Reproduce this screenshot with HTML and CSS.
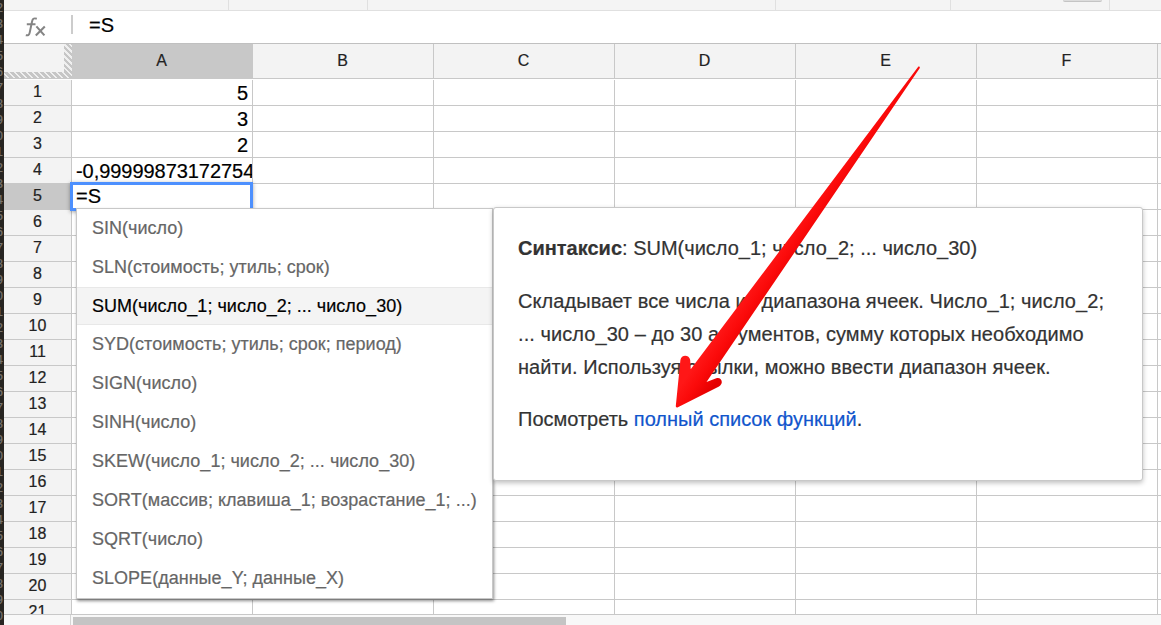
FILE: index.html
```
<!DOCTYPE html>
<html lang="ru">
<head>
<meta charset="utf-8">
<title>Таблица</title>
<link rel="stylesheet" href="styles.css">
</head>
<body>
<div class="app">
  <aside class="strip" id="strip"></aside>
  <main class="sheet">
    <div class="toolbar"><i class="t1"></i><i class="t2"></i><i class="t3"></i><i class="t4"></i><b class="knob"></b></div>
    <div class="formula">
      <svg class="fx" width="24" height="24" viewBox="0 0 24 24" fill="none" stroke="#858585" stroke-width="2">
        <path d="M12.8 3.8C9.6 2.6 8.6 4 8 6.8L5.7 17.6C5.3 19.8 4.2 20.8 1.8 20.2M2.8 9.2H11.5"/>
        <path stroke-width="2.1" d="M12.4 11.4L20.4 20.4M20.8 11.4L11.8 20.4"/>
      </svg>
      <span class="divider"></span>
      <span class="value">=S</span>
    </div>
    <div class="heads">
      <div class="corner"></div>
      <div class="col active">A</div><div class="col">B</div><div class="col">C</div><div class="col">D</div><div class="col">E</div><div class="col">F</div><div class="col last"></div>
    </div>
    <div class="grid" id="grid"></div>
    <div class="scroll"><div class="pad"></div><div class="thumb"></div></div>
  </main>
</div>
<div class="editor">=S</div>
<ul class="menu">
  <li><span>SIN(число)</span></li>
  <li><span>SLN(стоимость; утиль; срок)</span></li>
  <li class="selected"><span>SUM(число_1; число_2; ... число_30)</span></li>
  <li><span>SYD(стоимость; утиль; срок; период)</span></li>
  <li><span>SIGN(число)</span></li>
  <li><span>SINH(число)</span></li>
  <li><span>SKEW(число_1; число_2; ... число_30)</span></li>
  <li><span>SORT(массив; клавиша_1; возрастание_1; ...)</span></li>
  <li><span>SQRT(число)</span></li>
  <li><span>SLOPE(данные_Y; данные_X)</span></li>
</ul>
<section class="help">
  <p><b>Синтаксис</b>: SUM(число_1; число_2; ... число_30)</p>
  <p class="about">Складывает все числа из диапазона ячеек. Число_1; число_2;<br>... число_30 – до 30 аргументов, сумму которых необходимо<br>найти. Используя ссылки, можно ввести диапазон ячеек.</p>
  <p>Посмотреть <a>полный список функций</a>.</p>
</section>
<svg class="arrow" width="250" height="350" viewBox="672 62 250 350">
  <defs>
    <linearGradient id="red" gradientUnits="userSpaceOnUse" x1="735" y1="307" x2="758" y2="323">
      <stop offset="0" stop-color="#ff1717"/><stop offset=".45" stop-color="#fb0a0a"/><stop offset="1" stop-color="#e40000"/>
    </linearGradient>
  </defs>
  <path fill="url(#red)" d="M918.4 66.6Q920 66 919.8 68L706.5 382L716.3 378.2C721.8 376.8 724 383.6 719 386.4L677.4 407.4Q675.6 407.8 675.8 406L680.4 360C681.2 354 689.4 354.4 690.2 360L690.7 369.2Z"/>
</svg>
<script src="script.js"></script>
</body>
</html>
```

FILE: styles.css
```
* { box-sizing: border-box; }
body { margin: 0; width: 1161px; height: 625px; overflow: hidden; position: relative; background: #fff; font-family: "Liberation Sans", Arial, sans-serif; color: #000; -webkit-text-stroke: 0.2px currentColor; }
.app { display: flex; height: 625px; }
.strip { width: 4px; flex: none; overflow: hidden; background: #272522; color: #77736e; font-size: 13px; line-height: 16px; display: flex; flex-direction: column; align-items: flex-end; }
.strip span { height: 16px; flex: none; margin-right: 1px; }
.sheet { flex: 1; min-width: 0; display: flex; flex-direction: column; }
.toolbar { height: 11px; flex: none; background: #f4f4f4; border-bottom: 1px solid #e0e0e0; display: flex; }
.toolbar i { height: 10px; border-right: 1px solid #e0e0e0; flex: none; }
.t1 { width: 225px; } .t2 { width: 139px; } .t3 { width: 408px; } .t4 { width: 175px; }
.knob { width: 39px; height: 2px; margin-left: 112px; background: #dcdcdc; border-bottom: 1px solid #c4c4c4; border-radius: 0 0 3px 3px; }
.knob::after { content: ""; display: block; width: 1px; height: 10px; margin-left: 46px; background: #e0e0e0; }
.formula { height: 33px; flex: none; border-bottom: 1px solid #c0c0c0; display: flex; align-items: flex-start; }
.fx { margin: 4px 0 0 20px; flex: none; }
.divider { width: 2px; height: 19px; margin: 4px 0 0 23px; background: #ccc; }
.value { margin-left: 16px; font-size: 20px; line-height: 29px; }
.heads { height: 35px; flex: none; display: flex; background: #f3f3f3; border-bottom: 1px solid #c8c8c8; font-size: 16px; color: #222; }
.corner { width: 68px; flex: none; border: solid #ccc; border-width: 0 8px 6px 0; border-image: repeating-linear-gradient(45deg, #c6c6c6 0 2.6px, #efefef 2.6px 4.2px) 0 8 6 0; }
.col { width: 181px; flex: none; border-right: 1px solid #c8c8c8; text-align: center; line-height: 33px; padding-right: 1px; }
.col.active { background: #c8c8c8; }
.col.last { width: 3px; border: 0; }
.grid { height: 536px; flex: none; overflow: hidden; border-bottom: 1px solid #c8c8c8; padding-top: 1px; }
.row { display: flex; height: 26px; }
.row > * { border-right: 1px solid #c8c8c8; border-bottom: 1px solid #c8c8c8; flex: none; width: 181px; height: 26px; }
.row .num { width: 68px; background: #f3f3f3; font-size: 16px; line-height: 24px; text-align: center; color: #222; }
.row .num.active { background: #c8c8c8; }
.row .cell.last { width: 3px; border-right: 0; }
.cell { font-size: 20px; line-height: 26px; text-align: right; padding-right: 4px; white-space: nowrap; overflow: hidden; }
.cell.long { text-align: left; padding: 0 0 0 4px; letter-spacing: -0.05px; }
.scroll { flex: 1; background: #f8f8f8; display: flex; }
.pad { width: 67px; border-right: 1px solid #d4d4d4; }
.thumb { width: 493px; margin: 2px 0 0 2px; background: #c4c4c4; }
.editor { position: absolute; left: 70px; top: 182px; width: 183px; height: 29px; border: 3px solid #4d90fe; background: #fff; font-size: 20px; line-height: 22px; padding-left: 3px; box-shadow: 0 1px 4px rgba(0,0,0,.35); }
.menu { position: absolute; left: 76px; top: 208px; width: 417px; height: 391px; margin: 0; padding: 0; list-style: none; background: #fff; border: 1px solid #c8c8c8; box-shadow: 1px 2px 3px rgba(0,0,0,.45); font-size: 18px; line-height: 38px; letter-spacing: 0.02px; color: #666; }
.menu li { height: 39px; padding-left: 15px; white-space: nowrap; }
.menu .selected { height: 38px; background: #f4f4f4; border-top: 1px solid #e8e8e8; border-bottom: 1px solid #e8e8e8; line-height: 36px; color: #000; }
.help { position: absolute; left: 493px; top: 207px; width: 650px; height: 274px; background: #fff; border: 1px solid #c8c8c8; border-radius: 3px; box-shadow: 0 2px 5px rgba(0,0,0,.25); padding: 24px 0 0 24px; font-size: 20px; line-height: 33px; color: #333; white-space: nowrap; }
.help p { margin: 0 0 19.5px; }
.help .about { letter-spacing: 0.07px; }
.help a { color: #1155cc; }
.arrow { position: absolute; left: 672px; top: 62px; }
```

FILE: script.js
```
const strip = document.getElementById('strip');
for (let i = 0; i < 40; i++) {
  const s = document.createElement('span');
  s.textContent = (i + 2) % 10;
  strip.append(s);
}
const values = ['5', '3', '2', '-0,99999873172754'];
const grid = document.getElementById('grid');
for (let r = 1; r <= 21; r++) {
  const row = document.createElement('div');
  row.className = 'row';
  const num = document.createElement('div');
  num.className = r === 5 ? 'num active' : 'num';
  num.textContent = r;
  row.append(num);
  for (let c = 0; c < 7; c++) {
    const cell = document.createElement('div');
    cell.className = 'cell' + (c === 6 ? ' last' : '') + (r === 4 && c === 0 ? ' long' : '');
    if (c === 0) cell.textContent = values[r - 1] || '';
    row.append(cell);
  }
  grid.append(row);
}
```
